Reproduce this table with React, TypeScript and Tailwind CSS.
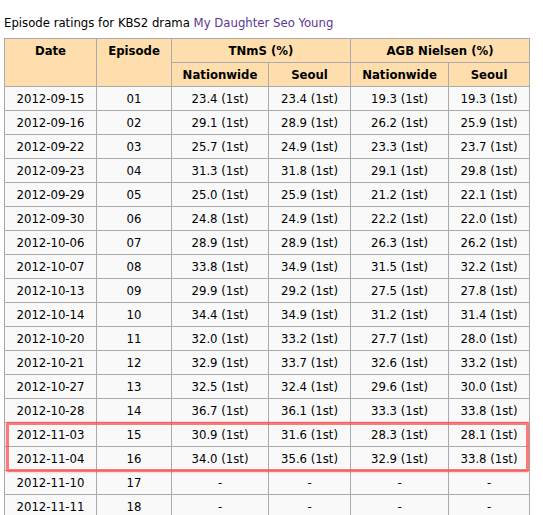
const rows: [string, string, string, string, string, string][] = [
  ['2012-09-15', '01', '23.4 (1st)', '23.4 (1st)', '19.3 (1st)', '19.3 (1st)'],
  ['2012-09-16', '02', '29.1 (1st)', '28.9 (1st)', '26.2 (1st)', '25.9 (1st)'],
  ['2012-09-22', '03', '25.7 (1st)', '24.9 (1st)', '23.3 (1st)', '23.7 (1st)'],
  ['2012-09-23', '04', '31.3 (1st)', '31.8 (1st)', '29.1 (1st)', '29.8 (1st)'],
  ['2012-09-29', '05', '25.0 (1st)', '25.9 (1st)', '21.2 (1st)', '22.1 (1st)'],
  ['2012-09-30', '06', '24.8 (1st)', '24.9 (1st)', '22.2 (1st)', '22.0 (1st)'],
  ['2012-10-06', '07', '28.9 (1st)', '28.9 (1st)', '26.3 (1st)', '26.2 (1st)'],
  ['2012-10-07', '08', '33.8 (1st)', '34.9 (1st)', '31.5 (1st)', '32.2 (1st)'],
  ['2012-10-13', '09', '29.9 (1st)', '29.2 (1st)', '27.5 (1st)', '27.8 (1st)'],
  ['2012-10-14', '10', '34.4 (1st)', '34.9 (1st)', '31.2 (1st)', '31.4 (1st)'],
  ['2012-10-20', '11', '32.0 (1st)', '33.2 (1st)', '27.7 (1st)', '28.0 (1st)'],
  ['2012-10-21', '12', '32.9 (1st)', '33.7 (1st)', '32.6 (1st)', '33.2 (1st)'],
  ['2012-10-27', '13', '32.5 (1st)', '32.4 (1st)', '29.6 (1st)', '30.0 (1st)'],
  ['2012-10-28', '14', '36.7 (1st)', '36.1 (1st)', '33.3 (1st)', '33.8 (1st)'],
  ['2012-11-03', '15', '30.9 (1st)', '31.6 (1st)', '28.3 (1st)', '28.1 (1st)'],
  ['2012-11-04', '16', '34.0 (1st)', '35.6 (1st)', '32.9 (1st)', '33.8 (1st)'],
  ['2012-11-10', '17', '-', '-', '-', '-'],
  ['2012-11-11', '18', '-', '-', '-', '-'],
]

const th = 'border border-[#aaaaaa] bg-[#ffdead] font-bold h-[24px] p-0 text-center'
const td = 'border border-[#aaaaaa] bg-[#f9f9f9] h-[24px] p-0 text-center'

export default function App() {
  return (
    <div className="relative w-[543px] h-[515px] overflow-hidden bg-white text-black text-[13px] leading-[16px] font-['DejaVu_Sans_Condensed','DejaVu_Sans',sans-serif]">
      <div className="pl-[4px] pt-[15px] h-[38px]">
        Episode ratings for KBS2 drama <span className="text-[#5a3696]">My Daughter Seo Young</span>
      </div>
      <table className="ml-[4px] w-[525px] table-fixed border-collapse">
        <colgroup>
          <col className="w-[92px]" />
          <col className="w-[75px]" />
          <col className="w-[97px]" />
          <col className="w-[82px]" />
          <col className="w-[98px]" />
          <col className="w-[81px]" />
        </colgroup>
        <thead>
          <tr>
            <th rowSpan={2} className={th + ' align-top pt-[4px]'}>Date</th>
            <th rowSpan={2} className={th + ' align-top pt-[4px]'}>Episode</th>
            <th colSpan={2} className={th}>TNmS (%)</th>
            <th colSpan={2} className={th}>AGB Nielsen (%)</th>
          </tr>
          <tr>
            <th className={th}>Nationwide</th>
            <th className={th}>Seoul</th>
            <th className={th}>Nationwide</th>
            <th className={th}>Seoul</th>
          </tr>
        </thead>
        <tbody>
          {rows.map(r => (
            <tr key={r[0]}>
              {r.map((c, i) => (
                <td key={i} className={td}>{c}</td>
              ))}
            </tr>
          ))}
        </tbody>
      </table>
      {/* highlight around episodes 15-16 */}
      <div className="absolute left-[6px] top-[422px] w-[523px] h-[50px] rounded-[2px] border-[3px] border-[#ff4444]/70 shadow-[0_0_2px_rgba(255,0,0,0.4)]" />
    </div>
  )
}
